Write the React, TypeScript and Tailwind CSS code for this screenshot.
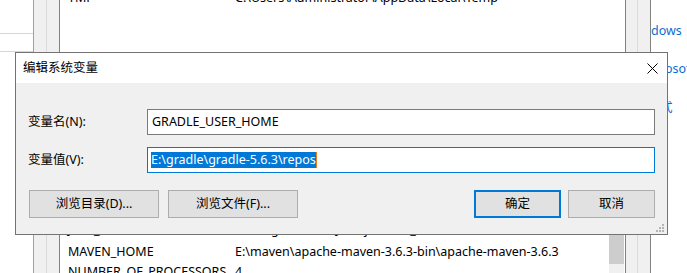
import React from "react";

const FONT = { fontFamily: '"Noto Sans", "Noto Sans CJK SC", sans-serif' };

function Row({ a, b }: { a: string; b: string }) {
  return (
    <div className="flex h-[20px] shrink-0 items-center whitespace-nowrap text-[12.5px] text-black">
      <div className="w-[175px] shrink-0 pl-[8px]">{a}</div>
      <div>{b}</div>
    </div>
  );
}

function Btn({ label, primary, w }: { label: string; primary?: boolean; w: string }) {
  return (
    <div
      className={`${w} h-[28px] flex items-center justify-center bg-[#e1e1e1] text-[12.5px] text-black ${
        primary ? "border-2 border-[#0078d7]" : "border border-[#adadad]"
      }`}
    >
      {label}
    </div>
  );
}

export default function App() {
  return (
    <div className="relative w-[687px] h-[273px] overflow-hidden bg-white flex" style={FONT}>
      {/* left margin */}
      <div className="w-[33px] shrink-0 flex flex-col">
        <div className="h-[34px] border-b border-[#d6d6d6]" />
        <div className="h-[18px] border-b border-[#d6d6d6]" />
      </div>
      {/* left strip */}
      <div className="w-[27px] shrink-0 flex border-l border-r border-l-[#a0a0a0] border-r-[#828282]">
        <div className="w-[12px] bg-[#f0f0f0]" />
        <div className="w-px bg-[#dadada]" />
        <div className="w-[12px] bg-[#f0f0f0]" />
      </div>
      {/* list */}
      <div className="w-[565px] shrink-0 flex pr-px">
        <div className="flex-1 flex flex-col overflow-hidden">
          <div className="-mt-[12px]">
            <Row a="TMP" b="C:\Users\Administrator\AppData\Local\Temp" />
          </div>
          <div className="h-[212px] shrink-0" />
          <Row a="JAVA_HOME" b="C:\Program Files\Java\jdk1.8.0_211" />
          <div className="h-[2px] shrink-0" />
          <Row a="MAVEN_HOME" b="E:\maven\apache-maven-3.6.3-bin\apache-maven-3.6.3" />
          <Row a="NUMBER_OF_PROCESSORS" b="4" />
        </div>
        <div className="w-[15px] shrink-0 flex flex-col">
          <div className="h-[200px] bg-white" />
          <div className="h-[64px] bg-[#cdcdcd]" />
          <div className="flex-1 bg-[#f0f0f0]" />
        </div>
      </div>
      {/* right strip */}
      <div className="w-[26px] shrink-0 flex border-l border-r border-l-[#828282] border-r-[#828282]">
        <div className="w-[11px] bg-[#f0f0f0]" />
        <div className="w-px bg-[#dadada]" />
        <div className="w-[12px] bg-[#f0f0f0]" />
      </div>
      {/* right area */}
      <div className="flex-1 flex flex-col overflow-hidden whitespace-nowrap text-[12.5px] leading-[19px] text-[#0a6ed1]">
        <div className="mt-[21px] h-[19px]">dows</div>
        <div className="mt-[19px] h-[19px] ml-[14px]">osoft</div>
        <div className="mt-[20px] h-[19px] ml-[9px]">式</div>
      </div>

      {/* dialog */}
      <div className="absolute left-[15px] top-[52px] w-[653px] h-[183px] z-10 border border-[#737373] flex flex-col">
        <div className="h-[30px] shrink-0 bg-white flex items-center justify-between pl-[7px] pr-[9px]">
          <span className="text-[12.5px] text-black">编辑系统变量</span>
          <svg width="11" height="11" viewBox="0 0 11 11">
            <path d="M0.5 0.5 L10.5 10.5 M10.5 0.5 L0.5 10.5" stroke="#000" strokeWidth="1" />
          </svg>
        </div>
        <div className="relative flex-1 bg-[#f0f0f0] flex flex-col">
          <div className="mt-[26px] flex items-center">
            <div className="w-[131px] shrink-0 pl-[12px] text-[12.5px] text-black">变量名(N):</div>
            <div className="w-[508px] h-[26px] border border-[#7a7a7a] bg-white flex items-center pl-[4px] text-[12.5px] text-black whitespace-nowrap">
              GRADLE_USER_HOME
            </div>
          </div>
          <div className="mt-[12px] flex items-center">
            <div className="w-[131px] shrink-0 pl-[12px] text-[12.5px] text-black">变量值(V):</div>
            <div className="w-[508px] h-[26px] border border-[#0078d7] bg-white flex items-center pl-[3px] text-[12.5px] whitespace-nowrap">
              <span className="bg-[#0078d7] text-white leading-[16px]">E:\gradle\gradle-5.6.3\repos</span>
              <span className="w-px h-[16px] bg-[#e8801a]" />
            </div>
          </div>
          <div className="mt-[17px] flex pl-[13px] pr-[12px]">
            <div className="flex gap-[9px]">
              <Btn label="浏览目录(D)..." w="w-[130px]" />
              <Btn label="浏览文件(F)..." w="w-[130px]" />
            </div>
            <div className="ml-auto flex gap-[7px]">
              <Btn label="确定" w="w-[87px]" primary />
              <Btn label="取消" w="w-[87px]" />
            </div>
          </div>
          <svg className="absolute right-[2px] bottom-[1px]" width="9" height="9" viewBox="0 0 9 9">
            <rect x="6" y="0" width="2" height="2" fill="#b4b4b4" />
            <rect x="3" y="3" width="2" height="2" fill="#b4b4b4" />
            <rect x="6" y="3" width="2" height="2" fill="#b4b4b4" />
            <rect x="0" y="6" width="2" height="2" fill="#b4b4b4" />
            <rect x="3" y="6" width="2" height="2" fill="#b4b4b4" />
            <rect x="6" y="6" width="2" height="2" fill="#b4b4b4" />
          </svg>
        </div>
      </div>
    </div>
  );
}
